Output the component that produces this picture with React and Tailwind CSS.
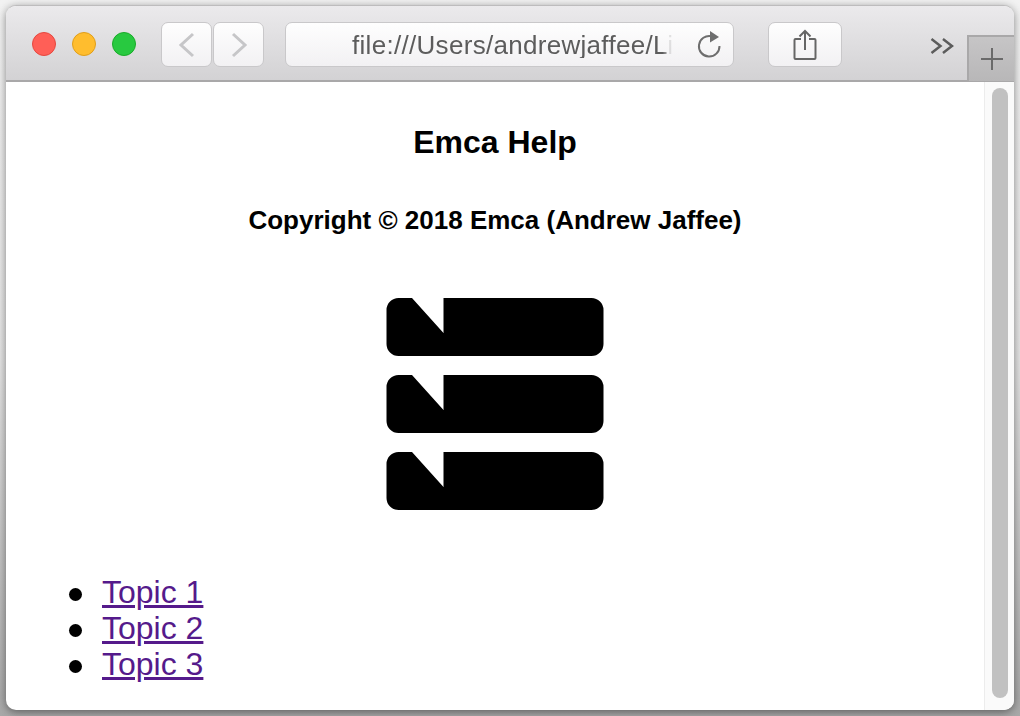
import React from "react";

function Bar({ y }) {
  return (
    <path
      d={`M12.500 ${y}H26L57.500 ${y + 35}V${y}H205.500A12 12 0 0 1 217.500 ${y + 12}V${y + 46}A12 12 0 0 1 205.500 ${y + 58}H12.500A12 12 0 0 1 0.500 ${y + 46}V${y + 12}A12 12 0 0 1 12.500 ${y}Z`}
      fill="#000"
    />
  );
}

function Light({ bg, border }) {
  return <div className={`h-6 w-6 rounded-full border ${bg} ${border}`} />;
}

function Topic({ children, href }) {
  return (
    <li className="flex items-center">
      <span className="mt-[4px] h-[13px] w-[13px] shrink-0 rounded-full bg-black" />
      <a href={href} className="ml-[20px] text-[#551a8b] underline">{children}</a>
    </li>
  );
}

const toolBtn =
  "flex h-[45px] items-center justify-center rounded-[7px] border border-[#c9c8ca] bg-gradient-to-b from-[#fefefe] to-[#f2f1f3]";

export default function App() {
  return (
    <div className="h-[716px] w-[1020px] overflow-hidden bg-gradient-to-b from-[#f2f2f2] via-[#e4e4e4] to-[#a8a8a8] px-[6px] pb-[6px] pt-[5px] font-['Liberation_Sans',Arial,sans-serif]">
      <div className="flex h-full flex-col overflow-hidden rounded-[10px] border-t border-[#bdbcbd] bg-white shadow-[0_2px_8px_rgba(0,0,0,0.45)]">
        <header className="flex h-[76px] shrink-0 items-start border-b-2 border-[#a9a8a9] bg-gradient-to-b from-[#ebeaec] to-[#d3d2d4]">
          <div className="ml-[26px] mt-[26px] flex gap-4">
            <Light bg="bg-[#ff5f57]" border="border-[#e5483f]" />
            <Light bg="bg-[#ffbd2e]" border="border-[#e09e1a]" />
            <Light bg="bg-[#28c940]" border="border-[#1aab29]" />
          </div>
          <div className="ml-[25px] mt-[16px] flex gap-[1px]">
            <div className={`${toolBtn} w-[51px]`}>
              <svg width="18" height="26" viewBox="0 0 18 26" fill="none" stroke="#c6c6c8" strokeWidth="3">
                <path d="M15 2 3 13l12 11" />
              </svg>
            </div>
            <div className={`${toolBtn} w-[51px]`}>
              <svg width="18" height="26" viewBox="0 0 18 26" fill="none" stroke="#c6c6c8" strokeWidth="3">
                <path d="m3 2 12 11L3 24" />
              </svg>
            </div>
          </div>
          <div className={`${toolBtn} ml-[21px] mt-[16px] w-[450px] justify-start`}>
            <div className="ml-[66px] w-[320px] overflow-hidden whitespace-nowrap text-[26px] leading-none tracking-[0.3px] text-[#5c5c5c] [mask-image:linear-gradient(to_right,#000_97%,transparent)]">
              file:///Users/andrewjaffee/Library
            </div>
            <svg className="ml-[24px]" width="26" height="28" viewBox="0 0 26 28" fill="none">
              <path d="M15.500 5.200A10.300 10.300 0 1 0 23.500 15" stroke="#6e6e6e" strokeWidth="2" />
              <path d="M14 0v11.500L23 6z" fill="#6e6e6e" />
            </svg>
          </div>
          <div className={`${toolBtn} ml-[34px] mt-[16px] w-[74px]`}>
            <svg width="24" height="32" viewBox="0 0 24 32" fill="none" stroke="#666" strokeWidth="2">
              <path d="M8 10H2.500a1 1 0 0 0-1 1v18a1 1 0 0 0 1 1h19a1 1 0 0 0 1-1V11a1 1 0 0 0-1-1H16" />
              <path d="M12 21V2M6.500 7.500 12 2l5.500 5.500" />
            </svg>
          </div>
          <svg className="ml-[88px] mt-[31px]" width="24" height="18" viewBox="0 0 24 18" fill="none" stroke="#5c5c5c" strokeWidth="2.500">
            <path d="m1.500 2 9 7-9 7M13 2l9 7-9 7" />
          </svg>
          <div className="ml-[13px] mt-[29px] flex h-[46px] w-[47px] items-center justify-center self-start border-l-2 border-t-2 border-[#a9a8a9] bg-gradient-to-b from-[#c6c5c6] to-[#b8b7b8]">
            <svg width="24" height="24" viewBox="0 0 24 24" stroke="#6a6a6a" strokeWidth="2">
              <path d="M1 12h22M12 1v22" />
            </svg>
          </div>
        </header>
        <div className="flex min-h-0 flex-1">
          <main className="min-w-0 flex-1 text-black">
            <h1 className="mt-[42px] text-center text-[32px] font-bold leading-[37px]">Emca Help</h1>
            <h2 className="mt-[44px] text-center text-[26px] font-bold leading-[30px]">
              Copyright © 2018 Emca (Andrew Jaffee)
            </h2>
            <svg className="mx-auto mt-[63px] block" width="218" height="212" viewBox="0 0 218 212">
              <Bar y={0} />
              <Bar y={77} />
              <Bar y={154} />
            </svg>
            <ul className="ml-[63px] mt-[64px] text-[32px] leading-[36px]">
              <Topic href="#t1">Topic 1</Topic>
              <Topic href="#t2">Topic 2</Topic>
              <Topic href="#t3">Topic 3</Topic>
            </ul>
          </main>
          <aside className="w-[30px] shrink-0 border-l border-[#ececec] bg-[#fafafa] pb-3 pl-[7px] pr-[7px] pt-[6px]">
            <div className="h-full w-4 rounded-full bg-[#c1c1c1]" />
          </aside>
        </div>
      </div>
    </div>
  );
}
